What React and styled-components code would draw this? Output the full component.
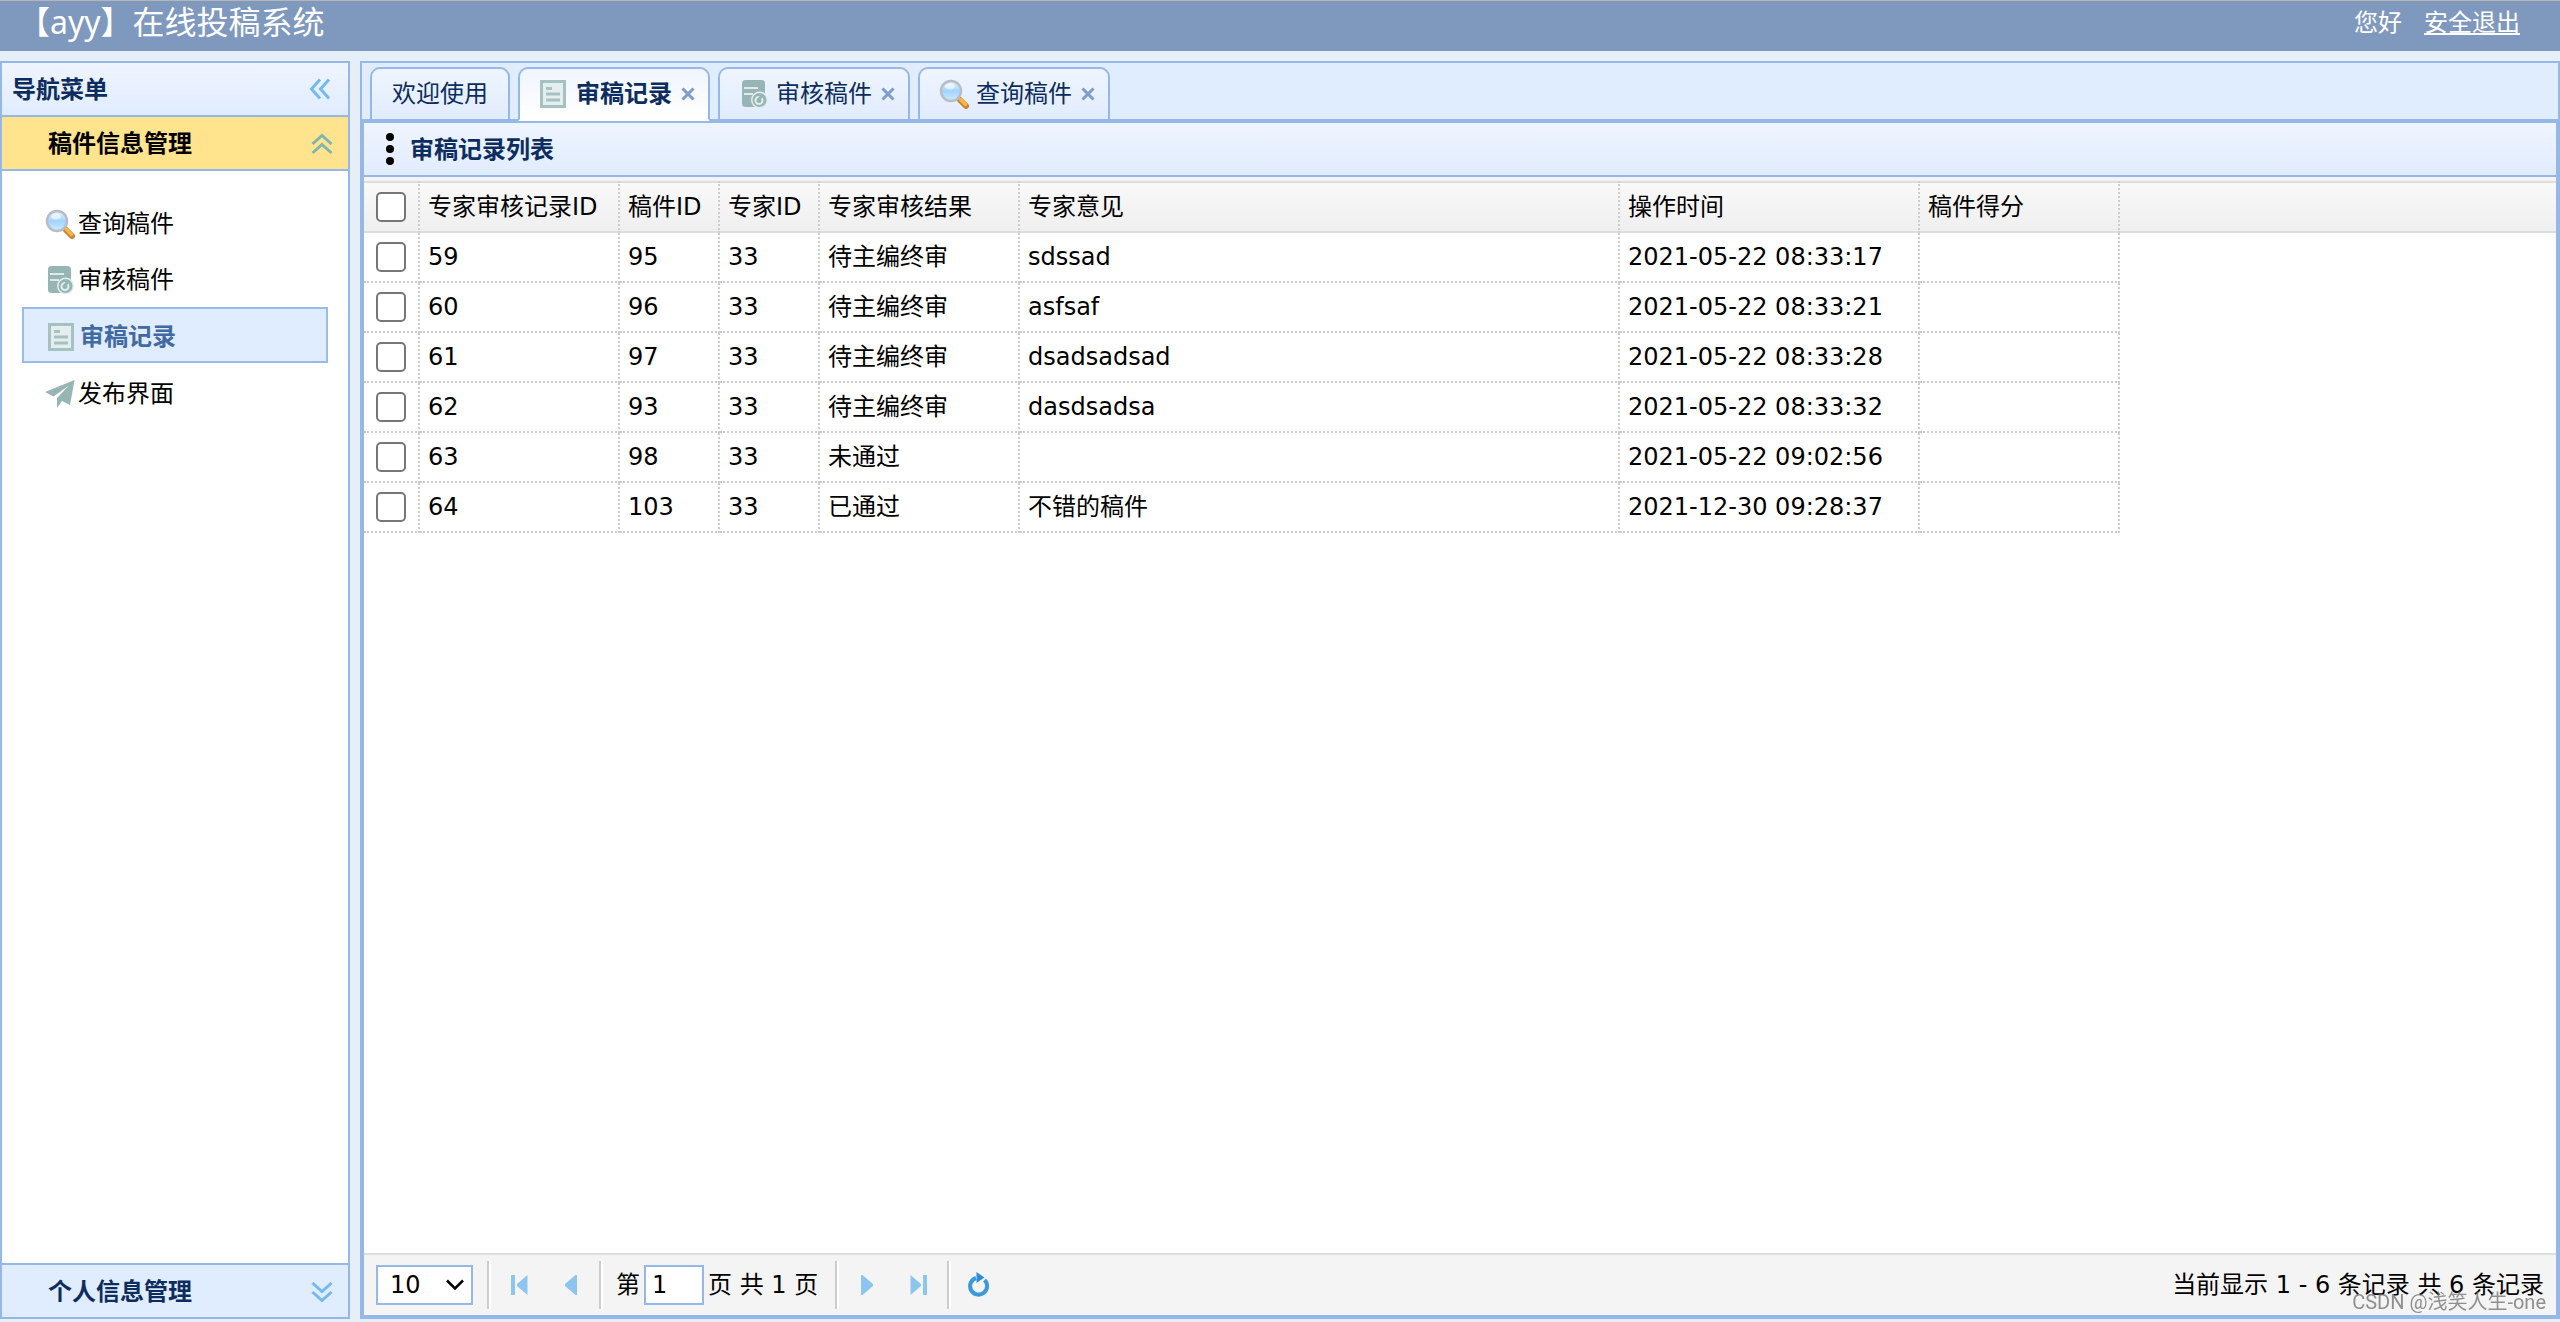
import React, { useState } from 'react';
import styled, { createGlobalStyle, css } from 'styled-components';

const GlobalStyle = createGlobalStyle`
  * {
    box-sizing: border-box;
  }
  body {
    margin: 0;
    background: #e6eef8;
    color: #000;
    font-family: 'DejaVu Sans', 'Noto Sans CJK SC', sans-serif;
    font-size: 24px;
    line-height: 32px;
  }
  button, input, select {
    font: inherit;
    color: inherit;
  }
  button {
    border: 0;
    padding: 0;
    background: none;
    cursor: pointer;
  }
`;

const Page = styled.div`
  display: flex;
  flex-direction: column;
  min-height: 100vh;
`;

const Header = styled.header`
  display: flex;
  justify-content: space-between;
  height: 51px;
  padding: 0 40px 0 18px;
  border-top: 1px solid #b5b5b5;
  background: #7f99be;
  color: #fff;
  font-family: 'Noto Sans', 'Noto Sans CJK SC', sans-serif;
  line-height: 42px;
`;

const Logo = styled.h1`
  margin: 0;
  font-size: 32px;
  font-weight: 400;
`;

const UserBar = styled.div`
  display: flex;
  gap: 22px;
  a {
    color: #fff;
  }
`;

const Body = styled.div`
  flex: 1;
  display: flex;
  gap: 10px;
  padding: 10px 0 3px;
`;

const Sidebar = styled.aside`
  display: flex;
  flex-direction: column;
  flex: 0 0 350px;
  border: 2px solid #95b8e7;
  background: #fff;
`;

const PanelHeader = styled.div`
  display: flex;
  align-items: center;
  height: 54px;
  padding: 0 16px 0 10px;
  border-bottom: 2px solid #95b8e7;
  background: linear-gradient(to bottom, #eff5ff 0, #e0ecff 100%);
  color: #0e2d5f;
`;

const PanelTitle = styled.h2`
  flex: 1;
  margin: 0;
  padding-top: 2px;
  font-size: 24px;
  font-weight: 700;
`;

const IconButton = styled.button`
  display: flex;
  color: #74b9f0;
`;

const AccordionHeader = styled.button`
  display: flex;
  align-items: center;
  justify-content: space-between;
  height: 54px;
  padding: 2px 14px 0 46px;
  border: 0 solid #95b8e7;
  border-width: ${({ $open }) => ($open ? '0 0 2px' : '2px 0 0')};
  background: ${({ $open }) => ($open ? '#ffe48d' : '#e0ecff')};
  color: ${({ $open }) => ($open ? '#000' : '#0e2d5f')};
  font-weight: 700;
  svg {
    color: ${({ $open }) => ($open ? '#80b5b0' : '#74b9f0')};
  }
`;

const Menu = styled.ul`
  flex: 1;
  display: flex;
  flex-direction: column;
  gap: 2px;
  margin: 0;
  padding: 24px 20px;
  list-style: none;
`;

const MenuLink = styled.a`
  display: flex;
  align-items: center;
  height: 54px;
  padding: 4px 22px 0;
  color: #000;
  text-decoration: none;
  svg {
    margin-right: 2px;
  }
  ${({ $active }) =>
    $active &&
    css`
      height: 56px;
      border: 2px solid #99bbe8;
      background: #e0ecff;
      color: #416aa3;
      font-weight: 700;
    `}
`;

const Workspace = styled.main`
  flex: 1;
  display: flex;
  flex-direction: column;
  min-width: 0;
  border: 2px solid #95b8e7;
`;

const TabBar = styled.div`
  display: flex;
  gap: 8px;
  height: 58px;
  padding: 4px 8px 0;
  border-bottom: 2px solid #95b8e7;
  background: #e0ecff;
`;

const Tab = styled.div`
  display: flex;
  align-items: center;
  height: 52px;
  padding: ${({ $closable }) => ($closable ? '0 8px 0 18px' : '0 20px')};
  border: 2px solid #95b8e7;
  border-bottom: 0;
  border-radius: 10px 10px 0 0;
  background: linear-gradient(to bottom, #eff5ff 0, #e0ecff 100%);
  color: #0e2d5f;
  ${({ $active }) =>
    $active &&
    css`
      height: 54px;
      border-bottom: 2px solid #fff;
      background: linear-gradient(to bottom, #eff5ff 0, #fff 100%);
      font-weight: 700;
    `}
`;

const TabLabel = styled.button`
  display: flex;
  align-items: center;
  gap: 6px;
`;

const TabClose = styled.button`
  display: flex;
  justify-content: center;
  width: 24px;
  margin-left: 4px;
  color: #7e9bcb;
`;

const TabPanel = styled.section`
  flex: 1;
  display: flex;
  flex-direction: column;
  border: 2px solid #95b8e7;
  background: #fff;
  ${PanelHeader} {
    gap: 4px;
  }
`;

const GridWrap = styled.div`
  flex: 1;
  border-top: 4px solid #f4f4f4;
`;

const Table = styled.table`
  width: 100%;
  table-layout: fixed;
  border-collapse: separate;
  border-spacing: 0;
  thead tr {
    background: linear-gradient(to bottom, #f9f9f9 0, #efefef 100%);
  }
  th, td {
    height: 50px;
    padding: 0 8px;
    border: 0 dotted #ccc;
    border-width: 0 2px 2px 0;
    font-weight: 400;
    text-align: left;
    white-space: nowrap;
    overflow: hidden;
  }
  th {
    height: 52px;
    border-top: 2px solid #ddd;
    border-bottom: 2px solid #ddd;
  }
  th:last-child, td:last-child {
    border-right: 0;
  }
  td:last-child {
    border-bottom: 0;
  }
  th:first-child, td:first-child {
    padding: 0 12px;
  }
`;

const Checkbox = styled.input.attrs({ type: 'checkbox' })`
  display: block;
  appearance: none;
  width: 30px;
  height: 30px;
  margin: 0;
  border: 2px solid #767676;
  border-radius: 5px;
  background: #fff;
  &:checked {
    border-color: #0075ff;
    background: #0075ff;
  }
`;

const Pager = styled.div`
  display: flex;
  align-items: center;
  height: 62px;
  padding: 0 12px;
  border-top: 2px solid #ddd;
  background: #f4f4f4;
`;

const SelectBox = styled.div`
  display: grid;
  align-items: center;
  width: 97px;
  margin-right: 12px;
  > * {
    grid-area: 1 / 1;
  }
  svg {
    justify-self: end;
    margin-right: 8px;
    pointer-events: none;
  }
`;

const PageSize = styled.select`
  appearance: none;
  width: 100%;
  height: 40px;
  padding: 0 12px;
  border: 2px solid #95b8e7;
  border-radius: 0;
  background: #fff;
`;

const Separator = styled.span`
  width: 4px;
  height: 48px;
  margin: 0 2px;
  border-left: 2px solid #ccc;
  border-right: 2px solid #fff;
`;

const PagerButton = styled.button`
  display: flex;
  justify-content: center;
  width: 52px;
  color: #8cc6f0;
`;

const PageLabel = styled.label`
  display: flex;
  align-items: center;
  gap: 4px;
  padding: 0 15px 0 11px;
`;

const PageInput = styled.input`
  width: 60px;
  height: 40px;
  padding: 0 6px;
  border: 2px solid #95b8e7;
`;

const PagerInfo = styled.div`
  margin-left: auto;
`;

const Watermark = styled.div`
  position: fixed;
  right: 14px;
  bottom: 8px;
  color: rgba(110, 110, 110, 0.75);
  font-family: Roboto, 'Noto Sans CJK SC', sans-serif;
  font-size: 20px;
  line-height: 24px;
  pointer-events: none;
`;

const Chevrons = ({ rotate = 0 }) => (
  <svg width="24" height="24" viewBox="0 0 24 24" fill="none" stroke="currentColor" strokeWidth="3">
    <g transform={`rotate(${rotate} 12 12)`}>
      <path d="M12 2.5 3.5 12l8.5 9.5" />
      <path d="M21 2.5 12.5 12l8.5 9.5" />
    </g>
  </svg>
);

const SearchIcon = () => (
  <svg width="32" height="32" viewBox="0 0 32 32">
    <defs>
      <linearGradient id="lens" x1="0" y1="0" x2="0" y2="1">
        <stop offset="0" stopColor="#eaf5ff" />
        <stop offset="0.5" stopColor="#a2d2ff" />
        <stop offset="1" stopColor="#c9f0ff" />
      </linearGradient>
    </defs>
    <path d="M19 19l4 4" stroke="#a8a8ac" strokeWidth="3" />
    <path d="M22 22l6 6" stroke="#c9813c" strokeWidth="6" strokeLinecap="round" />
    <path d="M22.5 21.5l5 5" stroke="#fbb63c" strokeWidth="3.5" strokeLinecap="round" />
    <circle cx="13" cy="13" r="10" fill="url(#lens)" stroke="#b9bdc6" strokeWidth="2.5" />
    <ellipse cx="12" cy="8.5" rx="5" ry="3" fill="#fff" opacity="0.6" />
  </svg>
);

const ReviewIcon = () => (
  <svg width="32" height="32" viewBox="0 0 32 32">
    <rect x="4" y="2" width="23" height="27" rx="3.5" fill="#98b5b5" />
    <path d="M6 10h14M6 16h9" stroke="#dfebea" strokeWidth="2" />
    <circle cx="21.5" cy="22" r="8.5" fill="#e3eeee" />
    <circle cx="21.5" cy="22" r="7" fill="#98b5b5" />
    <circle cx="21" cy="22.5" r="3.5" fill="none" stroke="#e3eeee" strokeWidth="2" />
    <path d="M20 22.5l4-5" stroke="#98b5b5" strokeWidth="3" />
  </svg>
);

const RecordIcon = () => (
  <svg width="32" height="32" viewBox="0 0 32 32" fill="none" stroke="#a5c1c0">
    <rect x="3.5" y="3.5" width="23" height="25" fill="#e4eeee" strokeWidth="3" />
    <path d="M8 10.5h6M8 16h14M8 22h14" strokeWidth="3" />
  </svg>
);

const PlaneIcon = () => (
  <svg width="32" height="32" viewBox="0 0 32 32" fill="#98b5b5">
    <path d="M30.5 2 1 14l8.5 4.5L25 7.5 13 20v10l5-7 8 4z" />
  </svg>
);

const CloseIcon = () => (
  <svg width="14" height="14" viewBox="0 0 14 14" stroke="currentColor" strokeWidth="3">
    <path d="M1.5 1.5l11 11M12.5 1.5l-11 11" />
  </svg>
);

const DotsIcon = () => (
  <svg width="32" height="32" viewBox="0 0 32 32">
    <circle cx="16" cy="4" r="4" />
    <circle cx="16" cy="16" r="4" />
    <circle cx="16" cy="28" r="4" />
  </svg>
);

const ArrowDown = () => (
  <svg width="20" height="12" viewBox="0 0 20 12" fill="none" stroke="#000" strokeWidth="2.5">
    <path d="M2 1.5l8 8 8-8" />
  </svg>
);

const StepIcon = ({ bar, back }) => (
  <svg width="20" height="20" viewBox="0 0 20 20" fill="currentColor">
    <g transform={back ? 'rotate(180 10 10)' : undefined}>
      {bar ? (
        <path d="M1.5 0 12 9v2L1.5 20zM14 0h4v20h-4z" />
      ) : (
        <path d="M4 0h1.5l10.5 9v2L5.5 20H4z" />
      )}
    </g>
  </svg>
);

const RefreshIcon = () => (
  <svg width="26" height="28" viewBox="0 0 26 28" fill="none">
    <path d="M18.5 9A8.5 8.5 0 1 1 10 7" stroke="#3b9ade" strokeWidth="4" />
    <path d="M10.5 1v11l8-5.5z" fill="#2f8fd6" />
  </svg>
);

const icons = {
  search: SearchIcon,
  review: ReviewIcon,
  record: RecordIcon,
  plane: PlaneIcon,
};

const menu = [
  { text: '查询稿件', icon: 'search' },
  { text: '审核稿件', icon: 'review' },
  { text: '审稿记录', icon: 'record' },
  { text: '发布界面', icon: 'plane' },
];

const tabs = [
  { text: '欢迎使用' },
  { text: '审稿记录', icon: 'record' },
  { text: '审核稿件', icon: 'review' },
  { text: '查询稿件', icon: 'search' },
];

const columns = [
  { title: '专家审核记录ID', width: 200 },
  { title: '稿件ID', width: 100 },
  { title: '专家ID', width: 100 },
  { title: '专家审核结果', width: 200 },
  { title: '专家意见', width: 600 },
  { title: '操作时间', width: 300 },
  { title: '稿件得分', width: 200 },
];

const rows = [
  ['59', '95', '33', '待主编终审', 'sdssad', '2021-05-22 08:33:17', ''],
  ['60', '96', '33', '待主编终审', 'asfsaf', '2021-05-22 08:33:21', ''],
  ['61', '97', '33', '待主编终审', 'dsadsadsad', '2021-05-22 08:33:28', ''],
  ['62', '93', '33', '待主编终审', 'dasdsadsa', '2021-05-22 08:33:32', ''],
  ['63', '98', '33', '未通过', '', '2021-05-22 09:02:56', ''],
  ['64', '103', '33', '已通过', '不错的稿件', '2021-12-30 09:28:37', ''],
];

const RecordGrid = () => (
  <GridWrap>
    <Table>
      <colgroup>
        <col width={56} />
        {columns.map(({ title, width }) => (
          <col key={title} width={width} />
        ))}
        <col />
      </colgroup>
      <thead>
        <tr>
          <th>
            <Checkbox aria-label="全选" />
          </th>
          {columns.map(({ title }) => (
            <th key={title}>{title}</th>
          ))}
          <th />
        </tr>
      </thead>
      <tbody>
        {rows.map((row) => (
          <tr key={row[0]}>
            <td>
              <Checkbox aria-label={row[0]} />
            </td>
            {row.map((value, i) => (
              <td key={columns[i].title}>{value}</td>
            ))}
            <td />
          </tr>
        ))}
      </tbody>
    </Table>
  </GridWrap>
);

const Pagination = () => {
  const [page, setPage] = useState('1');
  return (
    <Pager>
      <SelectBox>
        <PageSize aria-label="每页条数" defaultValue="10">
          <option>10</option>
          <option>20</option>
          <option>50</option>
        </PageSize>
        <ArrowDown />
      </SelectBox>
      <Separator />
      <PagerButton aria-label="首页">
        <StepIcon bar back />
      </PagerButton>
      <PagerButton aria-label="上一页">
        <StepIcon back />
      </PagerButton>
      <Separator />
      <PageLabel>
        第
        <PageInput value={page} onChange={(e) => setPage(e.target.value)} />
        页 共 1 页
      </PageLabel>
      <Separator />
      <PagerButton aria-label="下一页">
        <StepIcon />
      </PagerButton>
      <PagerButton aria-label="末页">
        <StepIcon bar />
      </PagerButton>
      <Separator />
      <PagerButton aria-label="刷新">
        <RefreshIcon />
      </PagerButton>
      <PagerInfo>当前显示 1 - 6 条记录 共 6 条记录</PagerInfo>
    </Pager>
  );
};

const App = () => {
  const [active, setActive] = useState('审稿记录');
  return (
    <Page>
      <GlobalStyle />
      <Header>
        <Logo>【ayy】在线投稿系统</Logo>
        <UserBar>
          <span>您好</span>
          <a href="#logout">安全退出</a>
        </UserBar>
      </Header>
      <Body>
        <Sidebar>
          <PanelHeader>
            <PanelTitle>导航菜单</PanelTitle>
            <IconButton aria-label="收起">
              <Chevrons />
            </IconButton>
          </PanelHeader>
          <AccordionHeader $open>
            稿件信息管理
            <Chevrons rotate={90} />
          </AccordionHeader>
          <Menu>
            {menu.map(({ text, icon }) => {
              const Icon = icons[icon];
              return (
                <li key={text}>
                  <MenuLink href="#menu" $active={text === active} onClick={() => setActive(text)}>
                    <Icon />
                    {text}
                  </MenuLink>
                </li>
              );
            })}
          </Menu>
          <AccordionHeader>
            个人信息管理
            <Chevrons rotate={-90} />
          </AccordionHeader>
        </Sidebar>
        <Workspace>
          <TabBar>
            {tabs.map(({ text, icon }) => {
              const Icon = icons[icon];
              return (
                <Tab key={text} $active={text === active} $closable={!!icon}>
                  <TabLabel onClick={() => setActive(text)}>
                    {Icon && <Icon />}
                    {text}
                  </TabLabel>
                  {icon && (
                    <TabClose aria-label="关闭">
                      <CloseIcon />
                    </TabClose>
                  )}
                </Tab>
              );
            })}
          </TabBar>
          <TabPanel>
            <PanelHeader>
              <DotsIcon />
              <PanelTitle>审稿记录列表</PanelTitle>
            </PanelHeader>
            <RecordGrid />
            <Pagination />
          </TabPanel>
        </Workspace>
      </Body>
      <Watermark>CSDN @浅笑人生-one</Watermark>
    </Page>
  );
};

export default App;
